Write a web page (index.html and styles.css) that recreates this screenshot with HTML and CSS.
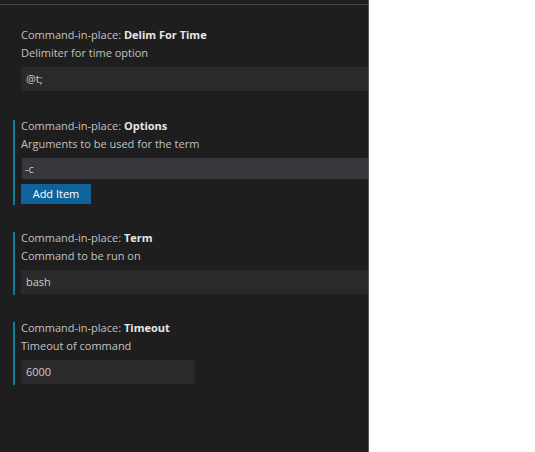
FILE: index.html
```html
<!DOCTYPE html>
<html>
<head>
<meta charset="utf-8">
<link rel="stylesheet" href="styles.css">
</head>
<body>
<div class="panel">
  <div class="topline"></div>
  <div class="list">
    <div class="item first">
      <div class="title"><span class="cat">Command-in-place: </span><span class="label">Delim For Time</span></div>
      <div class="desc">Delimiter for time option</div>
      <div class="input">@t;</div>
    </div>
    <div class="item modified">
      <div class="title"><span class="cat">Command-in-place: </span><span class="label">Options</span></div>
      <div class="desc">Arguments to be used for the term</div>
      <div class="row">-c</div>
      <div class="btn">Add Item</div>
    </div>
    <div class="item modified">
      <div class="title"><span class="cat">Command-in-place: </span><span class="label">Term</span></div>
      <div class="desc">Command to be run on</div>
      <div class="input">bash</div>
    </div>
    <div class="item modified">
      <div class="title"><span class="cat">Command-in-place: </span><span class="label">Timeout</span></div>
      <div class="desc">Timeout of command</div>
      <div class="input narrow">6000</div>
    </div>
  </div>
</div>
</body>
</html>
```

FILE: styles.css
```css
html, body {
  margin: 0;
  padding: 0;
  background: #ffffff;
}
body {
  font-family: "Open Sans", "Noto Sans", sans-serif;
  font-size: 11px;
}
.panel {
  width: 368px;
  height: 452px;
  background: #1e1e1e;
  border-right: 1px solid #5a5a5a;
  padding-top: 4px;
  box-sizing: content-box;
}
.topline {
  height: 1px;
  background: #474747;
}
.list {
  display: flex;
  flex-direction: column;
  gap: 27px;
  padding-top: 24px;
  padding-left: 13px;
}
.item {
  display: flex;
  flex-direction: column;
  align-items: flex-start;
  border-left: 2px solid transparent;
  padding-left: 6px;
  padding-bottom: 1px;
}
.item.first {
  margin-bottom: 1px;
}
.item.modified {
  border-left-color: #0c7d9d;
}
.title {
  margin-top: -3px;
  line-height: 18px;
  color: #c2c2c2;
  white-space: nowrap;
}
.label {
  font-weight: 700;
  color: #e6e6e6;
}
.desc {
  line-height: 18px;
  color: #c2c2c2;
}
.input {
  margin-top: 5px;
  width: 347px;
  height: 24px;
  line-height: 24px;
  box-sizing: border-box;
  padding-left: 5px;
  background: #2a2a2a;
  color: #cccccc;
}
.input.narrow {
  width: 174px;
}
.row {
  margin-top: 5px;
  width: 346px;
  margin-left: 1px;
  height: 21px;
  line-height: 21px;
  box-sizing: border-box;
  padding-left: 3px;
  background: #37373d;
  color: #cccccc;
}
.btn {
  margin-top: 5px;
  width: 70px;
  height: 20px;
  line-height: 20px;
  text-align: center;
  background: #0e639c;
  color: #ffffff;
  font-size: 11px;
}
```
